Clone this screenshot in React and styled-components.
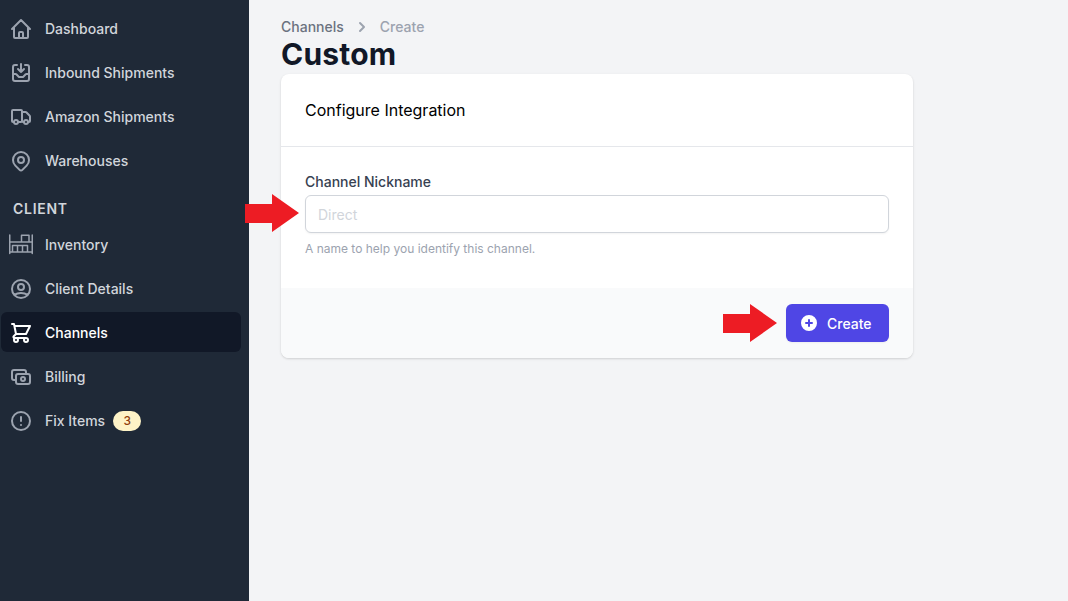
import React from "react";
import styled, { createGlobalStyle } from "styled-components";

const Global = createGlobalStyle`
  html, body { margin: 0; padding: 0; height: 100%; background: #f3f4f6; }
  body { font-family: Inter, "Liberation Sans", sans-serif; overflow: hidden; }
  #root { height: 100%; }
  * { box-sizing: border-box; }
`;

const Page = styled.div`
  display: flex;
  width: 1068px;
  height: 601px;
  background: #f3f4f6;
`;
const Sidebar = styled.nav`
  width: 249px;
  flex: none;
  background: #1f2937;
  padding: 9px 8px 0 1px;
  display: flex;
  flex-direction: column;
  gap: 4px;
`;
const NavRow = styled.a`
  display: flex;
  align-items: center;
  height: 40px;
  margin: ${(p) => (p.$active ? "-1px 0 1px" : "0")};
  padding: ${(p) => (p.$active ? "2px 0 0 8px" : "0 0 0 8px")};
  border-radius: 6px;
  font-size: 14px;
  font-weight: 500;
  line-height: 20px;
  color: ${(p) => (p.$active ? "#ffffff" : "#d1d5db")};
  background: ${(p) => (p.$active ? "#111827" : "transparent")};
`;
const IconBox = styled.svg`
  width: 24px;
  height: 24px;
  flex: none;
  margin-right: 12px;
  fill: none;
  stroke: ${(p) => (p.$active ? "#ffffff" : "#9ca3af")};
  stroke-width: ${(p) => p.$weight};
  stroke-linecap: round;
  stroke-linejoin: round;
`;
const SectionTitle = styled.div`
  margin: 14px 0 2px 12px;
  font-size: 14px;
  line-height: 20px;
  font-weight: 600;
  letter-spacing: 0.7px;
  color: #d1d5db;
`;
const Badge = styled.span`
  margin-left: 8px;
  width: 28px;
  height: 20px;
  border-radius: 10px;
  background: #fef3c7;
  color: #92400e;
  font-size: 12px;
  line-height: 20px;
  font-weight: 500;
  text-align: center;
`;
const Main = styled.main`
  flex: 1;
  padding: 17px 0 0 32px;
`;
const Crumbs = styled.div`
  display: flex;
  align-items: center;
  height: 20px;
  font-size: 14px;
  font-weight: 500;
  line-height: 20px;
  color: #6b7280;
`;
const CrumbLast = styled.span`
  color: #9ca3af;
`;
const Chevron = styled.svg`
  width: 20px;
  height: 20px;
  margin: 0 8px;
  fill: #9ca3af;
`;
const Title = styled.h1`
  margin: -1px 0 0;
  font-size: 30px;
  line-height: 36px;
  font-weight: 700;
  letter-spacing: 0.2px;
  color: #111827;
`;
const Card = styled.section`
  position: relative;
  width: 632px;
  margin-top: 2px;
  background: #fff;
  border-radius: 8px;
  box-shadow: 0 1px 3px rgba(0, 0, 0, 0.1), 0 1px 2px rgba(0, 0, 0, 0.06);
`;
const CardHead = styled.header`
  height: 73px;
  padding: 0 24px;
  display: flex;
  align-items: center;
  font-size: 16px;
  line-height: 24px;
  font-weight: 400;
  color: #000;
  border-bottom: 1px solid #e5e7eb;
`;
const CardBody = styled.div`
  padding: 25px 24px 32px;
  height: 141px;
`;
const Label = styled.label`
  display: block;
  font-size: 14px;
  line-height: 20px;
  font-weight: 500;
  color: #374151;
`;
const Input = styled.input`
  display: block;
  width: 100%;
  height: 38px;
  margin-top: 3px;
  padding: 1px 12px 0;
  font: 400 14px/20px Inter, sans-serif;
  border: 1px solid #d1d5db;
  border-radius: 6px;
  box-shadow: 0 1px 2px rgba(0, 0, 0, 0.05);
  outline: none;
  &::placeholder { color: #d1d5db; opacity: 1; }
`;
const Hint = styled.p`
  margin: 8px 0 0;
  font-size: 12px;
  line-height: 16px;
  color: #9ca3af;
`;
const CardFoot = styled.footer`
  height: 70px;
  padding: 16px 24px;
  display: flex;
  justify-content: flex-end;
  background: #f9fafb;
  border-radius: 0 0 8px 8px;
`;
const Button = styled.button`
  display: flex;
  align-items: center;
  width: 103px;
  height: 38px;
  padding: 0 0 0 13px;
  border: 0;
  border-radius: 6px;
  background: #4f46e5;
  color: #fff;
  font: 500 14px/20px Inter, sans-serif;
  box-shadow: 0 1px 2px rgba(0, 0, 0, 0.05);
`;
const ButtonLabel = styled.span`
  padding-top: 2px;
`;
const PlusIcon = styled.svg`
  width: 20px;
  height: 20px;
  margin-right: 8px;
  fill: #fff;
`;
const Arrow = styled.svg`
  position: absolute;
  left: ${(p) => p.$left}px;
  top: ${(p) => p.$top}px;
  width: 54px;
  height: 38px;
  fill: #ed1c24;
`;

const paths = {
  home: ["M3 12l2-2m0 0l7-7 7 7M5 10v10a1 1 0 001 1h3m10-11l2 2m-2-2v10a1 1 0 01-1 1h-3m-6 0a1 1 0 001-1v-4a1 1 0 011-1h2a1 1 0 011 1v4a1 1 0 001 1m-6 0h6"],
  inbox: ["M8 4H6a2 2 0 00-2 2v12a2 2 0 002 2h12a2 2 0 002-2V6a2 2 0 00-2-2h-2m-4-1v8m0 0l3-3m-3 3L9 8m-5 5h2.586a1 1 0 01.707.293l2.414 2.414a1 1 0 00.707.293h3.172a1 1 0 00.707-.293l2.414-2.414a1 1 0 01.707-.293H20"],
  truck: ["M9 17a2 2 0 11-4 0 2 2 0 014 0zM19 17a2 2 0 11-4 0 2 2 0 014 0z", "M13 16V6a1 1 0 00-1-1H4a1 1 0 00-1 1v10a1 1 0 001 1h1m8-1a1 1 0 01-1 1H9m4-1V8a1 1 0 011-1h2.586a1 1 0 01.707.293l3.414 3.414a1 1 0 01.293.707V16a1 1 0 01-1 1h-1m-6-1a1 1 0 001 1h1"],
  pin: ["M17.657 16.657L13.414 20.9a1.998 1.998 0 01-2.827 0l-4.244-4.243a8 8 0 1111.314 0z", "M15 11a3 3 0 11-6 0 3 3 0 016 0z"],
  shelves: ["M.75 2v18.5M23.25 2v18.5M.75 9h22.5M.75 19h22.5M12.5 9V2.2h7.5V9M3.5 19v-6.5h15V19M8.5 12.5V19M13.5 12.5V19"],
  user: ["M5.121 17.804A13.937 13.937 0 0112 16c2.5 0 4.847.655 6.879 1.804M15 10a3 3 0 11-6 0 3 3 0 016 0zm6 2a9 9 0 11-18 0 9 9 0 0118 0z"],
  cart: ["M3 3h2l.4 2M7 13h10l4-8H5.4M7 13L5.4 5M7 13l-2.293 2.293c-.63.63-.184 1.707.707 1.707H17m0 0a2 2 0 100 4 2 2 0 000-4zm-8 2a2 2 0 11-4 0 2 2 0 014 0z"],
  cash: ["M17 9V7a2 2 0 00-2-2H5a2 2 0 00-2 2v6a2 2 0 002 2h2m2 4h10a2 2 0 002-2v-6a2 2 0 00-2-2H9a2 2 0 00-2 2v6a2 2 0 002 2zm7-5a2 2 0 11-4 0 2 2 0 014 0z"],
  alert: ["M12 8v4m0 4h.01M21 12a9 9 0 11-18 0 9 9 0 0118 0z"],
};

const Icon = ({ name, active }) => (
  <IconBox viewBox="0 0 24 24" $active={active} $weight={name === "shelves" ? 1.5 : 2}>
    {paths[name].map((d) => <path key={d} d={d} />)}
  </IconBox>
);

const Item = ({ icon, active, children }) => (
  <NavRow $active={active}>
    <Icon name={icon} active={active} />
    {children}
  </NavRow>
);

const BigArrow = ({ left, top }) => (
  <Arrow $left={left} $top={top} viewBox="0 0 54 38">
    <polygon points="0,10 27,10 27,0 54,19 27,38 27,29 0,29" />
  </Arrow>
);

export default function App() {
  return (
    <Page>
      <Global />
      <Sidebar>
        <Item icon="home">Dashboard</Item>
        <Item icon="inbox">Inbound Shipments</Item>
        <Item icon="truck">Amazon Shipments</Item>
        <Item icon="pin">Warehouses</Item>
        <SectionTitle>CLIENT</SectionTitle>
        <Item icon="shelves">Inventory</Item>
        <Item icon="user">Client Details</Item>
        <Item icon="cart" active>Channels</Item>
        <Item icon="cash">Billing</Item>
        <Item icon="alert">Fix Items<Badge>3</Badge></Item>
      </Sidebar>
      <Main>
        <Crumbs>
          Channels
          <Chevron viewBox="0 0 20 20">
            <path fillRule="evenodd" clipRule="evenodd" d="M7.293 14.707a1 1 0 010-1.414L10.586 10 7.293 6.707a1 1 0 011.414-1.414l4 4a1 1 0 010 1.414l-4 4a1 1 0 01-1.414 0z" />
          </Chevron>
          <CrumbLast>Create</CrumbLast>
        </Crumbs>
        <Title>Custom</Title>
        <Card>
          <CardHead>Configure Integration</CardHead>
          <CardBody>
            <Label>Channel Nickname</Label>
            <Input placeholder="Direct" />
            <Hint>A name to help you identify this channel.</Hint>
          </CardBody>
          <CardFoot>
            <Button>
              <PlusIcon viewBox="0 0 20 20">
                <path fillRule="evenodd" clipRule="evenodd" d="M10 18a8 8 0 100-16 8 8 0 000 16zm1-11a1 1 0 10-2 0v2H7a1 1 0 100 2h2v2a1 1 0 102 0v-2h2a1 1 0 100-2h-2V7z" />
              </PlusIcon>
              <ButtonLabel>Create</ButtonLabel>
            </Button>
          </CardFoot>
          <BigArrow left={-36} top={120} />
          <BigArrow left={442} top={230} />
        </Card>
      </Main>
    </Page>
  );
}
